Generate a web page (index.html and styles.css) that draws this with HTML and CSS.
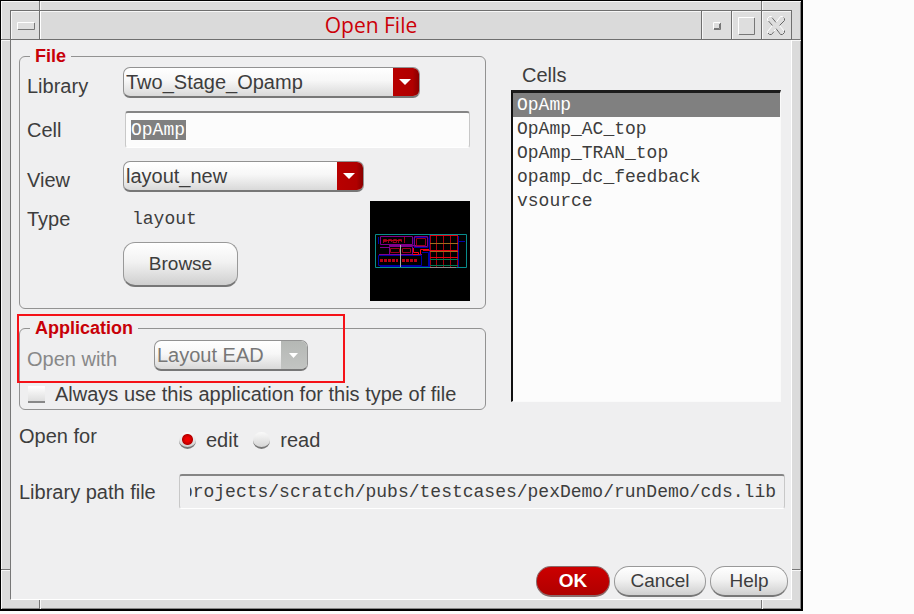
FILE: index.html
```html
<!DOCTYPE html>
<html lang="en">
<head>
<meta charset="utf-8">
<title>Open File</title>
<link rel="stylesheet" href="styles.css">
</head>
<body>
<main class="window">
  <i class="notch notch-v top left"></i>
  <i class="notch notch-v top right"></i>
  <i class="notch notch-v bottom left"></i>
  <i class="notch notch-v bottom right"></i>
  <i class="notch notch-h upper west"></i>
  <i class="notch notch-h upper east"></i>
  <i class="notch notch-h lower west"></i>
  <i class="notch notch-h lower east"></i>

  <header class="titlebar">
    <button class="tool" type="button" aria-label="Window menu">
      <svg width="28" height="28" viewBox="0 0 28 28" fill="none"><path d="M6.500 18V11.500H23" stroke="#fff"/><path d="M7 18.500H23.500V12" stroke="#777"/></svg>
    </button>
    <h1 class="title">Open File</h1>
    <button class="tool" type="button" aria-label="Minimize">
      <svg width="28" height="28" viewBox="0 0 28 28" fill="none"><path d="M11.500 18V11.500H18" stroke="#fff"/><path d="M12 18.500H18.500V12M12 17.500H17.500V13" stroke="#777"/></svg>
    </button>
    <button class="tool" type="button" aria-label="Maximize">
      <svg width="28" height="28" viewBox="0 0 28 28" fill="none"><path d="M6.500 23V6.500H22" stroke="#fff"/><path d="M7 23.500H22.500V7" stroke="#777"/></svg>
    </button>
    <button class="tool" type="button" aria-label="Close">
      <svg width="28" height="28" viewBox="0 0 28 28" fill="none"><path d="M7.500 5.500H9.500L14 11.500 18.500 5.500H20.500L22.500 7.500V9.500L17.500 14.500 22.500 20.500V21.500L20.500 23.500H18.500L14 17.500 9.500 23.500H7.500L5.500 21.500V20.500L10.500 14.500 5.500 9V7.500Z" stroke="#fff"/><path d="M10 6.500 14 11.500M21.500 6.500 22.500 7.500V9.500L17.500 14.500M10.500 14.500 6.500 10M22.500 19.500V21.500L20.500 23.500H18.500L14 17.500M12 20.500 9.500 23.500H7.500L6 22" stroke="#666"/></svg>
    </button>
  </header>

  <form class="content">
    <div class="columns">
      <div class="groups">
        <fieldset class="group">
          <legend>File</legend>
          <div class="fields">
            <label class="combo-label" for="library">Library</label>
            <span class="combo combo-library">
              <select id="library"><option>Two_Stage_Opamp</option></select>
              <svg class="arrow" viewBox="0 0 26 28" aria-hidden="true"><path d="M6 11H18L12 17Z" fill="#fff"/></svg>
            </span>
            <label for="cell">Cell</label>
            <input class="text cell-name" id="cell" type="text" value="OpAmp">
            <label class="combo-label" for="view">View</label>
            <span class="combo combo-view">
              <select id="view"><option>layout_new</option></select>
              <svg class="arrow" viewBox="0 0 26 28" aria-hidden="true"><path d="M6 11H18L12 17Z" fill="#fff"/></svg>
            </span>
          </div>
          <div class="details">
            <span>Type</span>
            <span class="mono type-value">layout</span>
            <svg class="preview" width="100" height="100" viewBox="0 0 100 100" fill="none" role="img" aria-label="Layout preview">
              <path d="M0 0H100V100H0Z" fill="#000"/>
              <path d="M8.500 36V43M8.500 54.500H51.500V64.500H8.500V54.500M44 36.500H58V46.500H44ZM52 51.500H58.500V65M59.500 34V66M88.500 35V66M89 40.500H95M10 65.500H60" stroke="#0000a8"/>
              <path d="M10.500 35.500H42.500V43.500H10.500ZM44.500 35.500H57.500V45.500H44.500ZM19.500 45.500H42.500V53.500H19.500ZM10 46.500H19M9 53.500H52M19 44.500H52" stroke="#80008c"/>
              <path d="M13.500 42V38.500H16.500V40.500H13M18.500 42V38.500H21.500V41M23.500 38.500H26.500V41.500H23ZM28.500 42V38.500H31.500V41M34.500 36V42M20.500 47.500H29.500V51.500H20.500ZM32.500 47.500H40.500V51.500H32.500ZM46.500 37.500H55.500V44.500H46.500Z" stroke="#98001c"/>
              <path d="M13 39.500H32" stroke="#b00014"/>
              <path d="M10 59.500H28M32 59.500H48" stroke="#b80014" stroke-width="3" stroke-dasharray="3 1"/>
              <path d="M43.500 47V51.500H48.500V53.500H43M50.500 53V48.500H59" stroke="#ff0010"/>
              <path d="M60.500 35V66M66.500 35V66M73.500 35V66M80.500 35V66M87.500 35V66" stroke="#a8000c"/>
              <path d="M60 34.500H88M53 49.500H88M60 56.500H88" stroke="#e00010"/>
              <path d="M60 42.500H88M60 50.500H88" stroke="#a06c1c"/>
              <path d="M60 58.500H88M60 64.500H88" stroke="#007850"/>
              <path d="M5.500 33.500H96.500V66.500H5.500Z" stroke="#088c8c"/>
              <path d="M60 66.500H86" stroke="#888"/>
              <path d="M30.500 44V66" stroke="#aaa"/>
            </svg>
            <button class="button browse" type="button">Browse</button>
          </div>
        </fieldset>

        <fieldset class="group application">
          <legend>Application</legend>
          <div class="open-with">
            <label class="combo-label" for="app">Open with</label>
            <span class="combo combo-app">
              <select id="app" disabled><option>Layout EAD</option></select>
              <svg class="arrow" viewBox="0 0 26 28" aria-hidden="true"><path d="M8 12H17L12.500 17Z" fill="#fff"/></svg>
            </span>
          </div>
          <label class="always"><input class="check" type="checkbox">Always use this application for this type of file</label>
          <i class="highlight"></i>
        </fieldset>
      </div>

      <div class="cells">
        <label for="cells">Cells</label>
        <select class="list" id="cells" size="10">
          <option selected>OpAmp</option>
          <option>OpAmp_AC_top</option>
          <option>OpAmp_TRAN_top</option>
          <option>opamp_dc_feedback</option>
          <option>vsource</option>
        </select>
      </div>
    </div>

    <div class="row open-for" role="radiogroup" aria-labelledby="open-for">
      <span id="open-for">Open for</span>
      <div class="choices">
        <label><input class="radio" type="radio" name="mode" checked>edit</label>
        <label><input class="radio" type="radio" name="mode">read</label>
      </div>
    </div>
    <div class="row path-row">
      <label for="path">Library path file</label>
      <input class="text path" id="path" type="text" readonly value="projects/scratch/pubs/testcases/pexDemo/runDemo/cds.lib">
    </div>

    <footer class="actions">
      <button class="button ok" type="submit">OK</button>
      <button class="button cancel" type="button">Cancel</button>
      <button class="button help" type="button">Help</button>
    </footer>
  </form>
</main>
</body>
</html>
```
FILE: styles.css
```css
* {
  box-sizing: border-box;
}

body {
  margin: 0;
  padding-right: 111px;
  background: #fcfcfc;
  color: #3d3d3d;
  font: 20px/24px "Liberation Sans", Arial, sans-serif;
}

button,
input,
select {
  appearance: none;
  margin: 0;
  border: 0;
  border-radius: 0;
  padding: 0;
  color: inherit;
  font: inherit;
}

/* Window frame */
.window {
  position: relative;
  border: 1px solid #000;
  border-width: 1px 2px 2px 1px;
  padding: 9px;
  background: #dbdbdb;
  box-shadow: inset 1px 1px #f7f7f7, inset -1px -1px #888;
}

.notch {
  position: absolute;
}

.notch-v {
  width: 2px;
  height: 9px;
  border-left: 1px solid #777;
  background: #f7f7f7;
}

.notch-h {
  width: 9px;
  height: 2px;
  border-top: 1px solid #777;
  background: #f7f7f7;
}

.top { top: 0; }
.bottom { bottom: 0; }
.left { left: 38px; }
.right { right: 38px; }
.upper { top: 38px; }
.lower { bottom: 38px; }
.west { left: 0; }
.east { right: 0; }

.titlebar {
  display: flex;
  height: 30px;
  border: 1px solid #6f6f6f;
  background: #dadada;
  box-shadow: inset 0 1px #f7f7f7;
}

.title {
  flex: 1;
  margin: 0;
  border-left: 1px solid #fff;
  color: #cc0008;
  font: 21px/28px "Open Sans", "Noto Sans", sans-serif;
  text-align: center;
}

.tool {
  display: block;
  width: 30px;
  height: 28px;
  border-left: 1px solid #6f6f6f;
  background: #dedede;
  box-shadow: inset 1px 1px #f7f7f7;
}

.tool:first-child {
  width: 29px;
  border-left: 0;
  border-right: 1px solid #6f6f6f;
}

.tool svg {
  display: block;
}

/* Dialog body */
.content {
  border: 1px solid #fff;
  border-left-color: #777;
  border-top: 0;
  padding: 5px 3px 2px 8px;
  background: #efeff0;
}

.columns {
  display: grid;
  grid-template-columns: minmax(0, 467fr) minmax(0, 270fr);
  gap: 25px;
  padding-right: 7px;
}

.groups {
  display: flex;
  flex-direction: column;
  gap: 8px;
}

.group {
  position: relative;
  min-width: 0;
  margin: 0;
  border: 1px solid #929292;
  border-radius: 6px;
  padding: 0 15px 7px 7px;
}

legend {
  margin-left: 3px;
  padding: 0 5px;
  color: #c80008;
  font-size: 18px;
  font-weight: bold;
  line-height: 22px;
}

.fields {
  display: grid;
  grid-template-columns: 96px minmax(0, 1fr);
  row-gap: 13px;
  align-items: center;
}

/* Sits a little below the middle of its drop-down */
.combo-label {
  padding-top: 7px;
}

.details {
  display: grid;
  grid-template-columns: 96px 1fr 100px;
  grid-template-rows: 36px 1fr;
  align-items: center;
  margin-top: 9px;
}

.preview {
  display: block;
  grid-area: 1 / 3 / 3 / 4;
}

.mono,
.text,
.list {
  font-family: "Liberation Mono", "Courier New", monospace;
  font-size: 18px;
}

.type-value {
  padding-left: 9px;
}

/* Controls */
.combo {
  display: grid;
  grid-template-columns: 1fr 26px;
  height: 31px;
  border: 1px solid #929292;
  border-bottom: 2px solid #777;
  border-radius: 7px;
  overflow: hidden;
  background: linear-gradient(#fff, #f7f7f7 45%, #d9d9d9);
}

.combo select {
  grid-area: 1 / 1 / 2 / 3;
  min-width: 0;
  padding: 0 28px 0 2px;
  background: transparent;
  line-height: 28px;
}

.combo-library { width: 297px; }
.combo-view { width: 241px; }
.combo-app { width: 154px; }

.arrow {
  grid-area: 1 / 2 / 2 / 3;
  width: 26px;
  height: 28px;
  background: linear-gradient(90deg, #b80000, #b00000 75%, #880000);
  pointer-events: none;
}

.text {
  width: 100%;
  border: 1px solid #c8c8c8;
  border-top: 2px solid #858585;
  border-bottom-color: #fff;
  border-radius: 3px;
  background: #fcfcfc;
}

.cell-name {
  justify-self: end;
  width: calc(100% - 2px);
  height: 37px;
  padding: 0 5px;
  background: linear-gradient(#808080, #808080) 5px 7px / 55px 20px no-repeat #fcfcfc;
  color: #fff;
}

.button {
  height: 31px;
  border: 1px solid #999;
  border-bottom: 2px solid #777;
  border-radius: 15px;
  background: linear-gradient(#fff, #f2f2f2 45%, #cfcfcf);
  font-size: 19px;
  line-height: 28px;
}

.browse {
  grid-column: 2;
  align-self: start;
  width: 115px;
  height: 45px;
  margin-top: 5px;
  border-radius: 12px;
}

.ok {
  width: 74px;
  border-color: #8a6a6a;
  background: linear-gradient(#cc0000, #b00000);
  color: #fff;
  font-weight: bold;
}

.cancel { width: 92px; }
.help { width: 78px; }

.open-with {
  display: grid;
  grid-template-columns: 127px auto;
  align-items: center;
  margin-top: 1px;
  color: #888;
}

.combo-app select {
  opacity: 1;
  color: #777;
}

.combo-app .arrow {
  background: linear-gradient(#b5b8b5, #c2c4c2);
}

.always {
  display: flex;
  align-items: center;
  gap: 10px;
  margin-top: 11px;
}

.application {
  padding-bottom: 3px;
}

.check {
  width: 17px;
  height: 17px;
  margin-left: 1px;
  border-bottom: 2px solid #888;
  background: linear-gradient(#fff, #dedede);
}

.highlight {
  position: absolute;
  top: -25px;
  left: -3px;
  width: 328px;
  height: 69px;
  border: 2px solid #f51218;
  pointer-events: none;
}

/* Cell list */
.cells {
  display: flex;
  flex-direction: column;
  padding-top: 18px;
}

.cells label {
  margin-left: 11px;
}

.list {
  flex: 1;
  width: 100%;
  margin: 3px 0 8px;
  border: 1px solid #fafafa;
  border-top: 3px solid #1c1c1c;
  border-left: 2px solid #111;
  background: #fcfcfc;
  overflow: hidden;
}

.list option {
  min-height: 0;
  padding: 2px 4px;
}

.list option:checked {
  background: linear-gradient(#808080, #808080);
  color: #fff;
}

/* Lower rows */
.row {
  display: grid;
  grid-template-columns: 160px minmax(0, 1fr);
  align-items: center;
}

.open-for {
  align-items: start;
  margin-top: 14px;
}

.choices {
  display: flex;
  gap: 15px;
  padding-top: 4px;
}

.choices label {
  display: flex;
  align-items: center;
  gap: 10px;
}

.radio {
  width: 17px;
  height: 17px;
  border-bottom: 2px solid #777;
  border-radius: 50%;
  background: linear-gradient(#fafafa, #d5d5d5);
}

.radio:checked {
  background: radial-gradient(circle at 50% 50%, #f00000 0 2px, #b80000 5px, transparent 6px), linear-gradient(#fafafa, #d0d0d0);
}

.path-row {
  margin-top: 22px;
}

.path {
  width: calc(100% - 3px);
  height: 35px;
  padding: 0 8px 0 10px;
  background: #efeff0;
  direction: rtl;
}

.actions {
  display: flex;
  justify-content: flex-end;
  gap: 4px;
  margin-top: 57px;
}
```
